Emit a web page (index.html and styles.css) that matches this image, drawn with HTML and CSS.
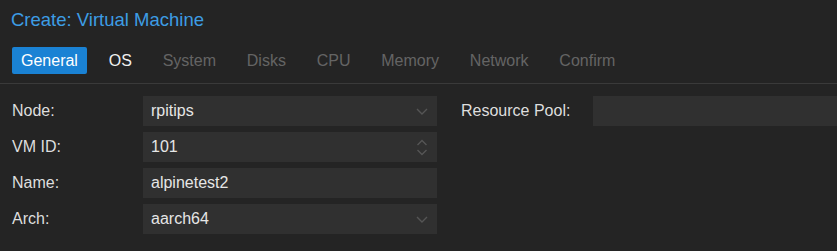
FILE: index.html
```html
<!DOCTYPE html>
<html lang="en">
<head>
  <meta charset="UTF-8">
  <meta name="viewport" content="width=device-width, initial-scale=1.0">
  <title>Create: Virtual Machine</title>
  <link rel="stylesheet" href="styles.css">
</head>
<body>
  <div class="dialog">
    <h1 class="dialog-title">Create: Virtual Machine</h1>

    <nav class="tabs">
      <span class="tab active">General</span>
      <span class="tab enabled">OS</span>
      <span class="tab">System</span>
      <span class="tab">Disks</span>
      <span class="tab">CPU</span>
      <span class="tab">Memory</span>
      <span class="tab">Network</span>
      <span class="tab">Confirm</span>
    </nav>

    <div class="form">
      <div class="column column-left">
        <label class="field-label">Node:</label>
        <div class="field">
          <span class="field-value">rpitips</span>
          <svg class="trigger" width="12" height="7" viewBox="0 0 12 7"><path d="M1 1 L6 6 L11 1" fill="none" stroke="#555" stroke-width="1.4"/></svg>
        </div>

        <label class="field-label">VM ID:</label>
        <div class="field">
          <span class="field-value">101</span>
          <svg class="trigger" width="12" height="17" viewBox="0 0 12 17"><path d="M1.5 6 L6 1.5 L10.5 6 M1.5 11 L6 15.5 L10.5 11" fill="none" stroke="#555" stroke-width="1.4"/></svg>
        </div>

        <label class="field-label">Name:</label>
        <div class="field">
          <span class="field-value">alpinetest2</span>
        </div>

        <label class="field-label">Arch:</label>
        <div class="field">
          <span class="field-value">aarch64</span>
          <svg class="trigger" width="12" height="7" viewBox="0 0 12 7"><path d="M1 1 L6 6 L11 1" fill="none" stroke="#555" stroke-width="1.4"/></svg>
        </div>
      </div>

      <div class="column column-right">
        <label class="field-label">Resource Pool:</label>
        <div class="field"></div>
      </div>
    </div>
  </div>
</body>
</html>
```

FILE: styles.css
```css
body {
  margin: 0;
  padding: 0;
  background-color: #242424;
  color: #dcdcdc;
  font-family: "Liberation Sans", Arial, sans-serif;
  font-size: 16px;
}

.dialog-title {
  margin: 0;
  padding: 9px 11px 0;
  font-size: 18.5px;
  font-weight: normal;
  line-height: 21px;
  color: #3d9de4;
}

.tabs {
  display: flex;
  gap: 12.8px;
  padding: 17px 12px 9px;
  border-bottom: 1px solid #3a3a3a;
}

.tab {
  padding: 4px 9px;
  line-height: 19px;
  border-radius: 2px;
  color: #646464;
}

.tab.enabled {
  color: #f0f0f0;
}

.tab.active {
  background-color: #1a82d4;
  color: #ffffff;
}

.form {
  display: flex;
  padding: 12px 0 0 12px;
}

.column {
  display: grid;
  grid-auto-rows: 30px;
  row-gap: 6px;
  align-items: center;
}

.column-left {
  grid-template-columns: 131px 294px;
}

.column-right {
  flex: 1;
  margin-left: 24px;
  grid-template-columns: 132px 1fr;
  align-content: start;
}

.field-label {
  color: #dedede;
}

.field {
  display: flex;
  align-items: center;
  height: 30px;
  padding: 0 9px 0 8px;
  background-color: #303030;
}

.field-value {
  flex: 1;
  color: #e6e6e6;
}

.trigger {
  display: block;
}
```
